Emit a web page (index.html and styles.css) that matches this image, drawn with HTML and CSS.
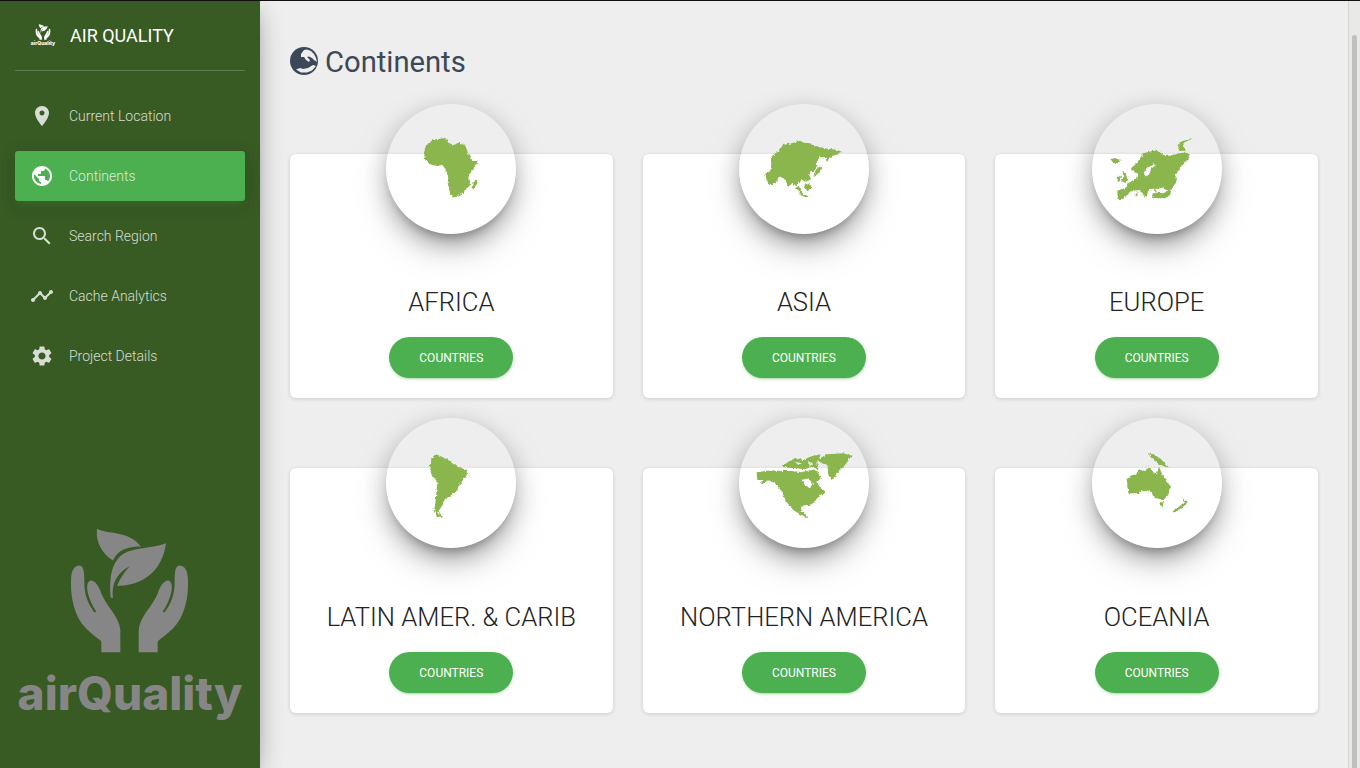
FILE: index.html
```html
<!DOCTYPE html>
<html lang="en">
<head>
    <meta charset="UTF-8">
    <meta name="viewport" content="width=device-width, initial-scale=1.0">
    <title>Air Quality - Continents</title>
    <link rel="stylesheet" href="styles.css">
</head>
<body>
    <svg class="defs" width="0" height="0">
        <filter id="rough" x="0" y="0" width="100%" height="100%">
            <feTurbulence type="fractalNoise" baseFrequency="0.35" numOctaves="2" seed="4"/>
            <feDisplacementMap in="SourceGraphic" scale="3.5" xChannelSelector="R" yChannelSelector="G"/>
        </filter>
        <symbol id="plant" viewBox="200 50 375 380">
            <path d="M238 165C222 165 212 180 212 210C210 260 222 320 258 355C275 372 290 382 303 392L303 425L360 425L360 360C358 320 320 290 303 250C298 230 285 210 272 210C262 210 258 225 262 245C267 265 275 285 288 303L283 306C262 280 252 250 252 215C252 195 252 165 238 165Z"/>
            <path transform="matrix(-1 0 0 1 775 0)" d="M238 165C222 165 212 180 212 210C210 260 222 320 258 355C275 372 290 382 303 392L303 425L360 425L360 360C358 320 320 290 303 250C298 230 285 210 272 210C262 210 258 225 262 245C267 265 275 285 288 303L283 306C262 280 252 250 252 215C252 195 252 165 238 165Z"/>
            <path d="M290 55C320 72 385 60 422 108C395 108 375 112 358 124C350 130 343 140 338 150C305 130 285 95 290 55Z"/>
            <path d="M497 98C455 115 395 108 362 135C332 162 326 205 331 262L338 262C334 225 345 190 388 167C372 185 358 205 350 226C425 225 485 185 497 98Z"/>
        </symbol>
    </svg>

    <div class="app">
        <aside class="sidebar">
            <div class="brand">
                <div class="brand-logo">
                    <svg class="brand-plant"><use href="#plant"/></svg>
                    <span class="brand-small">airQuality</span>
                </div>
                <span class="brand-name">AIR QUALITY</span>
            </div>

            <nav class="nav">
                <a class="nav-item">
                    <svg class="nav-icon" viewBox="0 0 24 24"><path d="M12 2C8.13 2 5 5.13 5 9c0 5.25 7 13 7 13s7-7.75 7-13c0-3.87-3.13-7-7-7zm0 9.5c-1.38 0-2.5-1.12-2.5-2.5s1.12-2.5 2.5-2.5 2.5 1.12 2.5 2.5-1.12 2.5-2.5 2.5z"/></svg>
                    Current Location
                </a>
                <a class="nav-item active">
                    <svg class="nav-icon" viewBox="0 0 24 24"><path d="M12 2C6.48 2 2 6.48 2 12s4.48 10 10 10 10-4.48 10-10S17.52 2 12 2zm-1 17.93c-3.95-.49-7-3.85-7-7.93 0-.62.08-1.21.21-1.79L9 15v1c0 1.1.9 2 2 2v1.93zm6.9-2.54c-.26-.81-1-1.39-1.9-1.39h-1v-3c0-.55-.45-1-1-1H8v-2h2c.55 0 1-.45 1-1V7h2c1.1 0 2-.9 2-2v-.41c2.93 1.19 5 4.06 5 7.41 0 2.08-.8 3.97-2.1 5.39z"/></svg>
                    Continents
                </a>
                <a class="nav-item">
                    <svg class="nav-icon" viewBox="0 0 24 24"><path d="M15.5 14h-.79l-.28-.27C15.41 12.59 16 11.11 16 9.5 16 5.91 13.09 3 9.5 3S3 5.91 3 9.5 5.91 16 9.5 16c1.61 0 3.09-.59 4.23-1.57l.27.28v.79l5 4.99L20.49 19l-4.99-5zm-6 0C7.01 14 5 11.99 5 9.5S7.01 5 9.5 5 14 7.01 14 9.5 11.99 14 9.5 14z"/></svg>
                    Search Region
                </a>
                <a class="nav-item">
                    <svg class="nav-icon" viewBox="0 0 24 24"><path d="M23 8c0 1.1-.9 2-2 2-.18 0-.35-.02-.51-.07l-3.56 3.55c.05.16.07.34.07.52 0 1.1-.9 2-2 2s-2-.9-2-2c0-.18.02-.36.07-.52l-2.55-2.55c-.16.05-.34.07-.52.07s-.36-.02-.52-.07l-4.55 4.56c.05.16.07.33.07.51 0 1.1-.9 2-2 2s-2-.9-2-2 .9-2 2-2c.18 0 .35.02.51.07l4.56-4.55C8.02 9.36 8 9.18 8 9c0-1.1.9-2 2-2s2 .9 2 2c0 .18-.02.36-.07.52l2.55 2.55c.16-.05.34-.07.52-.07s.36.02.52.07l3.55-3.56C19.02 8.35 19 8.18 19 8c0-1.1.9-2 2-2s2 .9 2 2z"/></svg>
                    Cache Analytics
                </a>
                <a class="nav-item">
                    <svg class="nav-icon" viewBox="0 0 24 24"><path d="M19.14 12.94c.04-.3.06-.61.06-.94 0-.32-.02-.64-.07-.94l2.03-1.58c.18-.14.23-.41.12-.61l-1.92-3.32c-.12-.22-.37-.29-.59-.22l-2.39.96c-.5-.38-1.03-.7-1.62-.94l-.36-2.54c-.04-.24-.24-.41-.48-.41h-3.84c-.24 0-.43.17-.47.41l-.36 2.54c-.59.24-1.13.57-1.62.94l-2.39-.96c-.22-.08-.47 0-.59.22L2.74 8.87c-.12.21-.08.47.12.61l2.03 1.58c-.05.3-.09.63-.09.94s.02.64.07.94l-2.03 1.58c-.18.14-.23.41-.12.61l1.92 3.32c.12.22.37.29.59.22l2.39-.96c.5.38 1.03.7 1.62.94l.36 2.54c.05.24.24.41.48.41h3.84c.24 0 .44-.17.47-.41l.36-2.54c.59-.24 1.13-.56 1.62-.94l2.39.96c.22.08.47 0 .59-.22l1.92-3.32c.12-.22.07-.47-.12-.61l-2.01-1.58zM12 15.6c-1.98 0-3.6-1.62-3.6-3.6s1.62-3.6 3.6-3.6 3.6 1.62 3.6 3.6-1.62 3.6-3.6 3.6z"/></svg>
                    Project Details
                </a>
            </nav>

            <div class="watermark">
                <svg class="watermark-plant"><use href="#plant"/></svg>
                <span class="watermark-text">airQuality</span>
            </div>
        </aside>

        <main class="main">
            <h1 class="page-title">
                <svg class="title-icon" viewBox="0 0 28 28">
                    <circle cx="14" cy="14" r="14"/>
                    <path class="title-land" d="M11 7L14 3L17 2.500L21 4L24 7L26 11L27 15L24 13L22 11L19 9.500L17 10L20 13L19 15L16 13L14 10L11 10ZM6 22.500L10 21L13 22L18 21L23 18L26 19L22 23.500L17 25.500L11 25.500Z"/>
                </svg>
                <span class="title-text">Continents</span>
            </h1>

            <section class="grid">
                <article class="card">
                    <div class="avatar">
                        <svg class="map" viewBox="318 222 390 390">
                            <path d="M432 368L436 352L445 340L458 330L478 326L497 324L505 338L522 345L535 338L552 342L558 352L565 372L578 393L595 392L585 410L570 430L565 443L570 465L555 483L540 495L518 503L510 485L503 460L505 445L500 425L488 405L470 408L450 403L435 390Z"/>
                            <path d="M590 448L592 460L583 478L575 475L578 460Z"/>
                        </svg>
                    </div>
                    <h2 class="card-title">AFRICA</h2>
                    <button class="btn">Countries</button>
                </article>

                <article class="card">
                    <div class="avatar">
                        <svg class="map" viewBox="27 12 390 390">
                            <path d="M105 222L125 207L122 170L150 150L158 135L185 130L210 122L222 128L240 130L262 140L290 146L310 148L338 155L315 165L300 170L290 188L287 172L268 172L258 190L262 200L250 215L242 212L238 225L243 238L228 245L215 240L205 250L195 258L188 248L175 260L165 238L148 228L135 252L115 252Z"/>
                            <path d="M270 196L277 204L266 222L250 228L256 215Z"/>
                            <path d="M198 262L206 258L222 284L214 285Z"/>
                            <path d="M222 258L238 248L245 262L232 274Z"/>
                            <path d="M205 282L225 285L245 290L225 291Z"/>
                        </svg>
                    </div>
                    <h2 class="card-title">ASIA</h2>
                    <button class="btn">Countries</button>
                </article>

                <article class="card">
                    <div class="avatar">
                        <svg class="map" viewBox="21 12 390 390">
                            <path fill-rule="evenodd" d="M97 272L125 262L128 250L150 238L158 232L160 222L140 210L138 205L155 190L175 160L205 152L218 152L240 168L262 165L290 158L318 160L310 180L298 190L285 205L272 225L272 250L262 262L255 285L240 295L205 295L200 285L215 278L205 265L190 270L185 290L175 285L165 270L145 272L125 285L118 297L98 297ZM176 218L190 202L208 192L214 195L198 206L192 224L184 228ZM212 270L225 262L250 272L235 280L217 278Z"/>
                            <path d="M278 152L285 125L325 115L296 128L294 142L302 152Z"/>
                            <path d="M76 177L90 175L107 180L100 190L85 188Z"/>
                            <path d="M112 210L122 222L130 240L118 248L108 244L115 232Z"/>
                            <path d="M95 232L107 228L108 240L97 242Z"/>
                            <path d="M148 282L158 280L156 290Z"/>
                        </svg>
                    </div>
                    <h2 class="card-title">EUROPE</h2>
                    <button class="btn">Countries</button>
                </article>

                <article class="card">
                    <div class="avatar">
                        <svg class="map" viewBox="18 9 390 390">
                            <path d="M148 158L155 130L170 118L195 130L215 140L232 155L262 165L258 185L240 205L232 225L215 240L195 252L188 270L178 285L175 295L188 305L172 305L162 290L168 250L172 200L155 180Z"/>
                        </svg>
                    </div>
                    <h2 class="card-title">LATIN AMER. &amp; CARIB</h2>
                    <button class="btn">Countries</button>
                </article>

                <article class="card">
                    <div class="avatar">
                        <svg class="map" viewBox="27 9 390 390">
                            <path fill-rule="evenodd" d="M80 172L120 166L155 168L185 168L215 172L240 166L262 168L272 190L262 200L270 218L290 232L270 240L255 258L240 272L230 270L215 272L212 290L222 295L230 305L245 312L230 308L210 298L190 285L165 255L158 232L135 205L115 195L90 212L100 195L82 195ZM215 195L235 190L248 205L240 220L225 210Z"/>
                            <path fill-rule="evenodd" d="M155 155L175 140L200 130L220 135L240 125L272 118L262 140L265 163L245 155L225 163L200 160L175 158ZM195 140L215 145L205 150ZM235 140L250 145L235 152Z"/>
                            <path d="M262 135L290 118L340 115L365 122L345 150L330 165L305 195L295 180L292 150L275 145Z"/>
                        </svg>
                    </div>
                    <h2 class="card-title">NORTHERN AMERICA</h2>
                    <button class="btn">Countries</button>
                </article>

                <article class="card">
                    <div class="avatar">
                        <svg class="map" viewBox="21 9 390 390">
                            <path d="M125 192L150 178L165 165L185 168L190 155L205 172L215 178L222 155L235 185L258 215L250 240L235 255L222 255L205 245L200 232L180 225L155 235L130 235Z"/>
                            <path d="M222 262L235 262L230 278Z"/>
                            <path d="M188 115L205 118L225 130L240 145L252 158L225 150L215 142L200 130Z"/>
                            <path d="M292 247L298 255L308 260L298 272L285 282L268 292L265 288L285 272L297 262Z"/>
                        </svg>
                    </div>
                    <h2 class="card-title">OCEANIA</h2>
                    <button class="btn">Countries</button>
                </article>
            </section>
        </main>

        <div class="scrollbar"><div class="scrollbar-thumb"></div></div>
    </div>
</body>
</html>
```

FILE: styles.css
```css
* {
    box-sizing: border-box;
}

html, body {
    height: 100%;
}

body {
    margin: 0;
    overflow: hidden;
    background-color: #eeeeee;
    color: #3c4858;
    font-family: Roboto, "Liberation Sans", sans-serif;
}

.defs {
    position: absolute;
}

.app {
    display: flex;
    height: 100%;
    border-top: 1px solid #111;
}

/* sidebar */
.sidebar {
    position: relative;
    z-index: 2;
    display: flex;
    flex-direction: column;
    flex: 0 0 260px;
    background-color: #385a23;
    box-shadow: 0 10px 30px -12px rgba(0, 0, 0, 0.42), 0 4px 25px 0 rgba(0, 0, 0, 0.12), 0 8px 10px -5px rgba(0, 0, 0, 0.2);
}

.brand {
    display: flex;
    align-items: center;
    gap: 14px;
    height: 70px;
    margin: 0 15px;
    padding-left: 15px;
    border-bottom: 1px solid rgba(255, 255, 255, 0.2);
}

.brand-logo {
    display: flex;
    flex-direction: column;
    align-items: center;
    width: 26px;
    margin-top: -2px;
}

.brand-plant {
    width: 16px;
    height: 16px;
    fill: #fff;
}

.brand-small {
    color: #fff;
    font-family: Inter, sans-serif;
    font-size: 5px;
    font-weight: 800;
    line-height: 6px;
}

.brand-name {
    color: #fff;
    font-size: 18px;
}

.nav {
    display: flex;
    flex-direction: column;
    gap: 10px;
    margin: 20px 15px 0;
}

.nav-item {
    display: flex;
    align-items: center;
    gap: 15px;
    height: 50px;
    padding-left: 15px;
    border-radius: 3px;
    color: rgba(255, 255, 255, 0.8);
    font-size: 14px;
    font-weight: 300;
}

.nav-item.active {
    background-color: #4caf50;
    box-shadow: 0 4px 20px 0 rgba(0, 0, 0, 0.14), 0 7px 10px -5px rgba(76, 175, 80, 0.4);
}

.nav-icon {
    width: 24px;
    height: 24px;
    fill: rgba(255, 255, 255, 0.8);
}

.nav-item.active .nav-icon {
    fill: #fff;
}

.watermark {
    display: flex;
    flex-direction: column;
    align-items: center;
    margin-top: auto;
    margin-bottom: 46px;
}

.watermark-plant {
    width: 125px;
    height: 127px;
    margin-left: -1px;
    fill: #868686;
}

.watermark-text {
    margin-top: 10px;
    color: #868686;
    font-family: Inter, sans-serif;
    font-size: 46px;
    font-weight: 800;
    line-height: 58px;
}

/* main area */
.main {
    flex: 1;
    min-width: 0;
    padding: 0 30px;
}

.page-title {
    display: flex;
    align-items: center;
    gap: 8px;
    height: 60px;
    margin: 30px 0 0;
    font-size: 29.2px;
    font-weight: 400;
    color: #3c4858;
}

.title-text {
    margin: 1px 0 0 -1px;
}

.title-icon {
    width: 28px;
    height: 28px;
    fill: #3c4858;
}

.title-land {
    fill: #eeeeee;
}

.grid {
    display: grid;
    grid-template-columns: repeat(3, 1fr);
    column-gap: 30px;
    row-gap: 70px;
    margin-top: 62.8px;
}

.card {
    display: flex;
    flex-direction: column;
    align-items: center;
    height: 244.6px;
    background-color: #fff;
    border-radius: 6px;
    box-shadow: 0 1px 4px 0 rgba(0, 0, 0, 0.14);
}

/* no fill: the shadow only paints outside the circle, so the page shows through */
.avatar {
    flex: none;
    width: 130px;
    height: 130px;
    margin-top: -50px;
    border-radius: 50%;
    box-shadow: 0 16px 38px -12px rgba(0, 0, 0, 0.56), 0 4px 25px 0 rgba(0, 0, 0, 0.12), 0 8px 10px -5px rgba(0, 0, 0, 0.2);
}

.map {
    display: block;
    width: 130px;
    height: 130px;
    fill: #8ab64e;
    filter: url(#rough);
}

.card-title {
    margin: 48.4px 0 0;
    color: #222;
    font-size: 25.6px;
    font-weight: 300;
    line-height: 40px;
}

.btn {
    width: 124px;
    height: 41px;
    margin-top: 14.8px;
    padding: 2px 0 0;
    border: none;
    border-radius: 30px;
    background-color: #4caf50;
    color: #fff;
    font-family: inherit;
    font-size: 12px;
    text-transform: uppercase;
    box-shadow: 0 2px 2px 0 rgba(76, 175, 80, 0.14), 0 3px 1px -2px rgba(76, 175, 80, 0.2), 0 1px 5px 0 rgba(76, 175, 80, 0.12);
}

/* window scrollbar */
.scrollbar {
    flex: 0 0 12px;
    padding: 34px 3px 0;
    border-left: 1px solid #d6d6d4;
    background-color: #e9e9e7;
}

.scrollbar-thumb {
    height: 100%;
    border-radius: 3px 3px 0 0;
    background-color: #c1c2c0;
}
```
